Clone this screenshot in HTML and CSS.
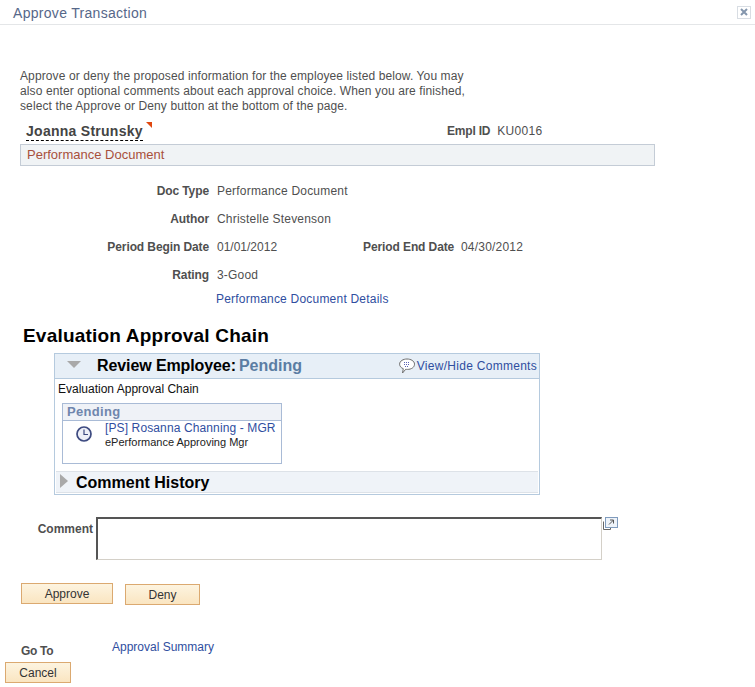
FILE: index.html
```html
<!DOCTYPE html>
<html lang="en">
<head>
    <meta charset="UTF-8">
    <title>Approve Transaction</title>
    <link rel="stylesheet" href="styles.css">
</head>
<body>
    <div class="titlebar">
        <span class="title">Approve Transaction</span>
        <span class="close">
            <svg width="10" height="10" viewBox="0 0 10 10"><path d="M2 2l6 6M8 2l-6 6" stroke="#8496ad" stroke-width="2" fill="none"/></svg>
        </span>
    </div>

    <p class="intro">Approve or deny the proposed information for the employee listed below. You may<br>also enter optional comments about each approval choice. When you are finished,<br>select the Approve or Deny button at the bottom of the page.</p>

    <div class="employee">
        <div class="name-wrap">
            <span class="name">Joanna Strunsky</span>
            <span class="flag"></span>
        </div>
        <div class="empl-id"><b>Empl ID</b><span>KU0016</span></div>
    </div>
    <div class="doc-bar">Performance Document</div>

    <div class="details">
        <div class="row"><span class="label">Doc Type</span><span>Performance Document</span></div>
        <div class="row"><span class="label">Author</span><span>Christelle Stevenson</span></div>
        <div class="row">
            <span class="label">Period Begin Date</span><span class="date">01/01/2012</span>
            <span class="label-end">Period End Date</span><span>04/30/2012</span>
        </div>
        <div class="row"><span class="label">Rating</span><span>3-Good</span></div>
        <a href="#" class="doc-link">Performance Document Details</a>
    </div>

    <h2 class="chain-title">Evaluation Approval Chain</h2>

    <div class="panel">
        <div class="panel-head">
            <span class="arrow-down"></span>
            <span class="head-text">Review Employee:<span class="status">Pending</span></span>
            <a href="#" class="comments-link">
                <svg width="16" height="16" viewBox="0 0 16 16"><path d="M8 1c3.800 0 7.500 2 7.500 5.200s-3.300 5.200-7 5.200c-.6 0-1.200 0-1.700-.2L3.500 15l.8-4.300C2.100 9.900.6 8.200.6 6.200.6 3 4.200 1 8 1z" fill="#fff" stroke="#6d6d6d"/><path d="M5 4.500h6M5 6.500h6M6 8.500h4" stroke="#5a63b5" stroke-dasharray="1 1" fill="none"/></svg>
                View/Hide Comments
            </a>
        </div>
        <div class="panel-body">
            <div class="chain-label">Evaluation Approval Chain</div>
            <div class="step">
                <div class="step-head">Pending</div>
                <div class="step-body">
                    <svg class="clock" width="18" height="18" viewBox="0 0 18 18"><circle cx="9" cy="9" r="7" fill="#eef0f8" stroke="#3d4a80" stroke-width="1.700"/><path d="M9 4.500V9.500H13" stroke="#3d4a80" stroke-width="1.200" fill="none"/></svg>
                    <div>
                        <a href="#" class="approver">[PS] Rosanna Channing - MGR</a>
                        <div class="role">ePerformance Approving Mgr</div>
                    </div>
                </div>
            </div>
        </div>
        <div class="history">
            <span class="arrow-right"></span>
            <span class="history-text">Comment History</span>
        </div>
    </div>

    <div class="comment">
        <label class="comment-label">Comment</label>
        <textarea class="comment-box"></textarea>
        <svg class="expand" width="16" height="14" viewBox="0 0 16 14"><path d="M1.500 4.500v8h7v-3" fill="none" stroke="#666"/><rect x="3.500" y="0.500" width="12" height="10" fill="#eef3f9" stroke="#7f9bbd"/><path d="M7 7.500l4.500-4.500M8 3h3.500v3.500" fill="none" stroke="#555"/></svg>
    </div>

    <div class="actions">
        <button class="btn btn-approve">Approve</button>
        <button class="btn btn-deny">Deny</button>
    </div>

    <div class="goto">
        <b>Go To</b>
        <a href="#">Approval Summary</a>
    </div>
    <button class="btn btn-cancel">Cancel</button>
</body>
</html>
```

FILE: styles.css
```css
body {
    font-family: "Liberation Sans", Arial, sans-serif;
    font-size: 12px;
    line-height: 15px;
    color: #4f4f4f;
    background-color: #fff;
    margin: 0;
    padding: 0;
}
a {
    color: #2f4ea0;
    text-decoration: none;
}
.titlebar {
    display: flex;
    justify-content: space-between;
    align-items: center;
    height: 24px;
    padding: 0 4px 0 13px;
    border-bottom: 1px solid #e4e6e8;
}
.title {
    font-size: 14px;
    letter-spacing: 0.3px;
    margin-top: 2px;
    color: #566789;
}
.close {
    display: flex;
    width: 12px;
    height: 11px;
    border: 1px solid #d8dde3;
    justify-content: center;
    align-items: center;
    margin-top: 0;
}
.intro {
    margin: 44px 0 0 20px;
    line-height: 15px;
    letter-spacing: 0.11px;
}
.employee {
    display: flex;
    margin: 6px 0 0 26px;
    height: 24px;
}
.name-wrap {
    display: flex;
    width: 421px;
}
.name {
    font-size: 14px;
    font-weight: bold;
    letter-spacing: 0.27px;
    line-height: 18px;
    height: 18px;
    margin-top: 2px;
    border-bottom: 1px dashed #000;
    color: #444;
}
.flag {
    width: 0;
    height: 0;
    margin: 2px 0 0 3px;
    border-top: 6px solid #e0480f;
    border-left: 6px solid transparent;
}
.empl-id {
    display: flex;
    gap: 7px;
    margin-top: 4px;
}
.empl-id b {
    letter-spacing: -0.2px;
}
.empl-id span {
    letter-spacing: 0.3px;
}
.doc-bar {
    width: 635px;
    height: 22px;
    margin-left: 20px;
    line-height: 20px;
    padding-left: 6px;
    box-sizing: border-box;
    font-size: 13px;
    background-color: #f0f3f5;
    border: 1px solid #c4ccd6;
    color: #a8503c;
}
.details {
    margin-top: 18px;
}
.row {
    display: flex;
    height: 28px;
    white-space: nowrap;
    letter-spacing: 0.2px;
}
.label {
    width: 209px;
    margin-right: 8px;
    text-align: right;
    font-weight: bold;
    letter-spacing: -0.1px;
}
.date {
    width: 146px;
    letter-spacing: 0;
}
.label-end {
    width: 90px;
    margin-right: 8px;
    text-align: right;
    font-weight: bold;
    letter-spacing: -0.1px;
}
.doc-link {
    display: block;
    margin: -4px 0 0 216px;
    letter-spacing: 0.21px;
}
.chain-title {
    margin: 18px 0 0 23px;
    font-size: 19px;
    letter-spacing: 0.2px;
    line-height: 22px;
    color: #000;
}
.panel {
    width: 486px;
    height: 142px;
    box-sizing: border-box;
    margin: 6px 0 0 54px;
    border: 1px solid #b5cade;
    display: flex;
    flex-direction: column;
}
.panel-head {
    display: flex;
    align-items: center;
    height: 24px;
    background-color: #e7eff7;
    border-bottom: 1px solid #b5cade;
    padding: 0 2px 0 12px;
}
.arrow-down {
    width: 0;
    height: 0;
    border-top: 7px solid #a9a9a9;
    border-left: 7px solid transparent;
    border-right: 7px solid transparent;
    margin: 0 16px 3px 0;
}
.head-text {
    flex-grow: 1;
    margin-bottom: 1px;
    font-size: 16px;
    font-weight: bold;
    letter-spacing: -0.1px;
    color: #000;
}
.status {
    margin-left: 3px;
    letter-spacing: 0;
    color: #5b7da3;
}
.comments-link {
    display: flex;
    align-items: center;
    gap: 2px;
    letter-spacing: 0.28px;
}
.panel-body {
    flex-grow: 1;
    padding: 3px 3px 0;
}
.chain-label {
    color: #111;
}
.step {
    width: 220px;
    height: 61px;
    box-sizing: border-box;
    margin: 6px 0 0 4px;
    border: 1px solid #a9bbd6;
}
.step-head {
    height: 16px;
    padding-left: 4px;
    font-size: 13px;
    letter-spacing: 0.3px;
    line-height: 16px;
    font-weight: bold;
    color: #6f86ad;
    background-color: #eff2f7;
    border-bottom: 1px solid #a9bbd6;
}
.step-body {
    display: flex;
}
.clock {
    margin: 4px 12px 0 12px;
}
.approver {
    display: block;
    letter-spacing: 0.12px;
}
.role {
    font-size: 11px;
    margin-top: -1px;
    color: #222;
}
.history {
    display: flex;
    align-items: center;
    height: 22px;
    margin: 0 1px 1px;
    background-color: #eff3f8;
    border-top: 1px solid #dde2e8;
    border-bottom: 1px solid #dde2e8;
    box-sizing: border-box;
    padding-left: 4px;
}
.arrow-right {
    width: 0;
    height: 0;
    border-left: 8px solid #a9a9a9;
    border-top: 7px solid transparent;
    border-bottom: 7px solid transparent;
    margin: 0 8px 3px 0;
}
.history-text {
    font-size: 16px;
    font-weight: bold;
    color: #000;
}
.comment {
    display: flex;
    margin-top: 22px;
}
.comment-label {
    width: 93px;
    margin: 5px 3px 0 0;
    text-align: right;
    font-weight: bold;
}
.comment-box {
    width: 506px;
    height: 43px;
    box-sizing: border-box;
    margin: 0;
    padding: 2px;
    border-style: solid;
    border-width: 2px 1px 1px 2px;
    border-color: #555 #d4d0c8 #d4d0c8 #555;
    resize: none;
}
.expand {
    margin-left: 0;
}
.actions {
    display: flex;
    align-items: flex-start;
    margin: 23px 0 0 21px;
}
.btn {
    height: 21px;
    padding: 0;
    font-family: "Liberation Sans", Arial, sans-serif;
    font-size: 12px;
    color: #333;
    background: linear-gradient(#fdf4e0, #fae5c1);
    border: 1px solid #dba970;
}
.btn-approve {
    width: 92px;
}
.btn-deny {
    width: 75px;
    margin: 1px 0 0 12px;
}
.goto {
    display: flex;
    align-items: flex-start;
    margin: 35px 0 0 21px;
    height: 22px;
}
.goto b {
    width: 91px;
    margin-top: 4px;
    letter-spacing: -0.3px;
}
.btn-cancel {
    display: block;
    width: 66px;
    margin-left: 5px;
}
```
